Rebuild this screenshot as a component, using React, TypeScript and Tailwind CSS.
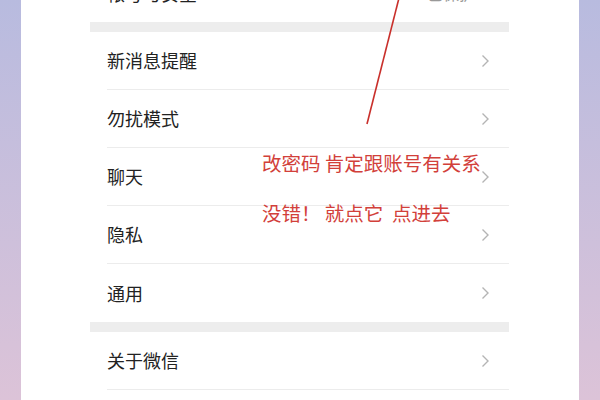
const items = ["新消息提醒", "勿扰模式", "聊天", "隐私", "通用"];

function Chevron() {
  return (
    <svg width="9" height="14" viewBox="0 0 9 14" fill="none" className="shrink-0">
      <path d="M1.5 1.5 7 7l-5.5 5.5" stroke="#b4b4b4" strokeWidth="1.4" />
    </svg>
  );
}

function Row({ label, divider = true }: { label: string; divider?: boolean }) {
  return (
    <div className="pl-[17px]">
      <div
        className={
          "flex h-[58px] items-center justify-between pr-[19px] " +
          (divider ? "border-b border-[#ececec]" : "")
        }
      >
        <span className="text-[18px] text-[#222]">{label}</span>
        <Chevron />
      </div>
    </div>
  );
}

export default function App() {
  return (
    <div
      className="h-[400px] w-[600px] overflow-hidden bg-gradient-to-b from-[#b8bbdf] to-[#dcc3d8]"
      style={{ fontFamily: '"Noto Sans CJK SC", "Noto Sans", sans-serif' }}
    >
      <div className="relative mx-[21px] flow-root h-full bg-white">
        <div className="ml-[69px] w-[419px]">
          {/* account row, cut off by the top edge */}
          <div className="-mt-[36px] flex h-[58px] items-center justify-between pl-[17px] pr-[19px]">
            <span className="text-[18px] text-[#222]">帐号与安全</span>
            <div className="flex items-center gap-[6px]">
              <span className="text-[16px] text-[#999]">已保护</span>
              <Chevron />
            </div>
          </div>
          <div className="h-[10px] bg-[#ededed]" />
          {items.map((label, i) => (
            <Row key={label} label={label} divider={i < items.length - 1} />
          ))}
          <div className="h-[10px] bg-[#ededed]" />
          <Row label="关于微信" />
        </div>

        {/* annotation overlay */}
        <svg className="absolute left-0 top-0" width="558" height="400">
          <line x1="378" y1="-2" x2="346" y2="124" stroke="#c9302c" strokeWidth="1.6" />
        </svg>
        <div className="absolute left-[241px] top-[148px] text-[19.5px] leading-[30px] text-[#d2403a]">
          <div>改密码 肯定跟账号有关系</div>
          <div className="mt-[20px] whitespace-pre">没错！ 就点它  点进去</div>
        </div>
      </div>
    </div>
  );
}
